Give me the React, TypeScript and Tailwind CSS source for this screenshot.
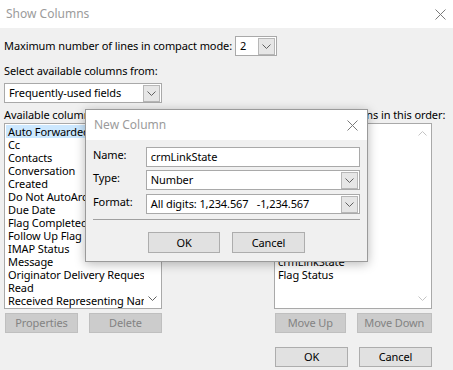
import type { ReactNode } from "react";

// Outlook "Show Columns" dialog with the "New Column" window on top.

const leftFields = [
  "Auto Forwarded",
  "Cc",
  "Contacts",
  "Conversation",
  "Created",
  "Do Not AutoArchive",
  "Due Date",
  "Flag Completed Date",
  "Follow Up Flag",
  "IMAP Status",
  "Message",
  "Originator Delivery Requested",
  "Read",
  "Received Representing Name",
];

const shownFields = [
  "Importance",
  "Reminder",
  "Icon",
  "Attachment",
  "From",
  "Subject",
  "Received",
  "Size",
  "Categories",
  "Mention",
  "crmLinkState",
  "Flag Status",
];

function Chevron({ up = false, color = "#606060" }: { up?: boolean; color?: string }) {
  return (
    <svg width="9" height="5" viewBox="0 0 9 5" className="block">
      <polyline
        points={up ? "0.5,4.5 4.5,0.5 8.5,4.5" : "0.5,0.5 4.5,4.5 8.5,0.5"}
        fill="none"
        stroke={color}
        strokeWidth="1"
      />
    </svg>
  );
}

function CloseX() {
  return (
    <svg width="11" height="11" viewBox="0 0 11 11" className="block">
      <path d="M0.5 0.5 L10.5 10.5 M10.5 0.5 L0.5 10.5" stroke="#7a7a7a" strokeWidth="1" />
    </svg>
  );
}

function Select({ value, className = "" }: { value: string; className?: string }) {
  return (
    <div className={`flex h-[20px] items-center border border-[#a9a9a9] bg-white ${className}`}>
      <span className="flex-1 truncate whitespace-pre pl-[4px] leading-[14px]">{value}</span>
      <div className="mr-px flex h-[17px] w-[17px] items-center justify-center border border-[#b7b7b7] bg-[#e6e6e6]">
        <Chevron />
      </div>
    </div>
  );
}

function Btn({
  children,
  disabled = false,
  className = "",
}: {
  children: ReactNode;
  disabled?: boolean;
  className?: string;
}) {
  const cls = disabled
    ? "border-[#bfbfbf] bg-[#cccccc] text-[#838383]"
    : "border-[#adadad] bg-[#e1e1e1] text-black";
  return (
    <div className={`flex items-center justify-center border leading-[14px] ${cls} ${className}`}>
      {children}
    </div>
  );
}

function ListBox({
  items,
  selected,
  arrowColor,
}: {
  items: string[];
  selected?: number;
  arrowColor: string;
}) {
  return (
    <div className="mt-px flex h-[186px] w-[158px] border border-[#a9a9a9] bg-white">
      <div className="flex-1 overflow-hidden p-px">
        {items.map((it, i) => (
          <div
            key={it + i}
            className={`h-[13px] whitespace-nowrap pl-[2px] leading-[13px] ${
              i === selected ? "bg-[#cce8ff]" : ""
            }`}
          >
            {it}
          </div>
        ))}
      </div>
      <div className="flex w-[17px] flex-col items-center justify-between py-[7px]">
        <Chevron up color={arrowColor} />
        <Chevron color={arrowColor} />
      </div>
    </div>
  );
}

function NewColumnDialog() {
  return (
    <div className="absolute left-[85px] top-[109px] h-[153px] w-[283px] border border-[#9a9a9a] bg-[#f0f0f0] shadow-[0_2px_10px_rgba(0,0,0,0.28)]">
      <div className="flex h-[30px] items-center justify-between bg-white pl-[8px] pr-[9px]">
        <span className="text-[12px] tracking-normal text-[#9b9b9b]">New Column</span>
        <CloseX />
      </div>
      <div className="px-[7px] pt-[7px]">
        <div className="flex items-start">
          <span className="w-[53px] pt-[1px] leading-[14px]">Name:</span>
          <div className="flex h-[20px] w-[215px] items-center border border-[#a9a9a9] bg-white pl-[4px] leading-[14px]">
            crmLinkState
          </div>
        </div>
        <div className="mt-[3px] flex items-start">
          <span className="w-[53px] pt-[1px] leading-[14px]">Type:</span>
          <Select value="Number" className="w-[215px]" />
        </div>
        <div className="mt-[4px] flex items-start">
          <span className="w-[53px] pt-[1px] leading-[14px]">Format:</span>
          <Select value="All digits: 1,234.567   -1,234.567" className="w-[215px]" />
        </div>
        <div className="mt-[5px] h-px w-[267px] bg-[#a0a0a0]" />
        <div className="ml-[55px] mt-[12px] flex gap-[12px]">
          <Btn className="h-[21px] w-[72px]">OK</Btn>
          <Btn className="h-[21px] w-[73px]">Cancel</Btn>
        </div>
      </div>
    </div>
  );
}

export default function App() {
  return (
    <div className="relative h-[370px] w-[453px] overflow-hidden bg-[#f0f0f0] font-['Noto_Sans',sans-serif] text-[11px] tracking-[-0.1px] text-black">
      <div className="flex h-[28px] items-center justify-between bg-white pl-[6px] pr-[7px]">
        <span className="text-[12px] tracking-normal text-[#9b9b9b]">Show Columns</span>
        <CloseX />
      </div>

      <div className="px-[4px]">
        <div className="mt-[8px] flex items-center">
          <span className="w-[231px] whitespace-nowrap leading-[14px]">
            Maximum number of lines in compact mode:
          </span>
          <Select value="2" className="w-[42px]" />
        </div>

        <div className="mt-[8px] leading-[14px]">Select available columns from:</div>
        <Select value="Frequently-used fields" className="mt-[5px] w-[158px]" />

        <div className="mt-[5px] flex gap-[112px]">
          <div className="w-[158px]">
            <div className="h-[14px] whitespace-nowrap leading-[14px]">Available columns:</div>
            <ListBox items={leftFields} selected={0} arrowColor="#606060" />
            <div className="ml-px mt-[4px] flex gap-[11px]">
              <Btn disabled className="h-[20px] w-[73px]">
                Properties
              </Btn>
              <Btn disabled className="h-[20px] w-[73px]">
                Delete
              </Btn>
            </div>
          </div>
          <div className="w-[158px]">
            <div className="h-[14px] whitespace-nowrap leading-[14px]">
              Show these columns in this order:
            </div>
            <ListBox items={shownFields} arrowColor="#c4c4c4" />
            <div className="ml-px mt-[4px] flex gap-[11px]">
              <Btn disabled className="h-[20px] w-[73px]">
                Move Up
              </Btn>
              <Btn disabled className="h-[20px] w-[78px]">
                Move Down
              </Btn>
            </div>
          </div>
        </div>

        <div className="ml-[271px] mt-[14px] flex gap-[11px]">
          <Btn className="h-[20px] w-[73px]">OK</Btn>
          <Btn className="h-[20px] w-[73px]">Cancel</Btn>
        </div>
      </div>

      <NewColumnDialog />
    </div>
  );
}
